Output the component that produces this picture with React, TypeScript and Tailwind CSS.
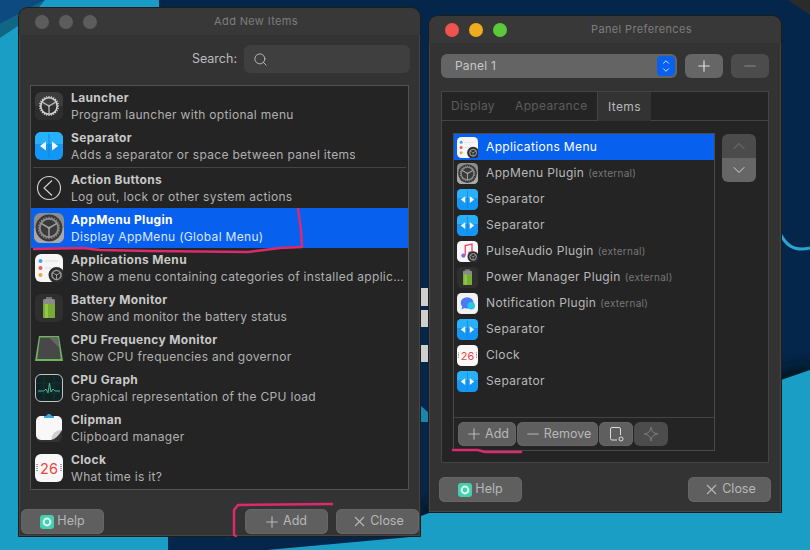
import React from "react";
import { Search, Plus, Minus, X, ChevronUp, ChevronDown } from "lucide-react";

type IconKind = "gearDark" | "gearLight" | "sep" | "action" | "apps" | "battery" | "cpu" | "graph" | "clipman" | "clock" | "pulse" | "notify";

const addItems: { name: string; desc: string; icon: IconKind; selected?: boolean; divider?: boolean }[] = [
  { name: "Launcher", desc: "Program launcher with optional menu", icon: "gearDark" },
  { name: "Separator", desc: "Adds a separator or space between panel items", icon: "sep", divider: true },
  { name: "Action Buttons", desc: "Log out, lock or other system actions", icon: "action" },
  { name: "AppMenu Plugin", desc: "Display AppMenu (Global Menu)", icon: "gearLight", selected: true },
  { name: "Applications Menu", desc: "Show a menu containing categories of installed applic…", icon: "apps" },
  { name: "Battery Monitor", desc: "Show and monitor the battery status", icon: "battery" },
  { name: "CPU Frequency Monitor", desc: "Show CPU frequencies and governor", icon: "cpu" },
  { name: "CPU Graph", desc: "Graphical representation of the CPU load", icon: "graph" },
  { name: "Clipman", desc: "Clipboard manager", icon: "clipman" },
  { name: "Clock", desc: "What time is it?", icon: "clock" },
];

const panelItems: { name: string; icon: IconKind; external?: boolean; selected?: boolean }[] = [
  { name: "Applications Menu", icon: "apps", selected: true },
  { name: "AppMenu Plugin", icon: "gearLight", external: true },
  { name: "Separator", icon: "sep" },
  { name: "Separator", icon: "sep" },
  { name: "PulseAudio Plugin", icon: "pulse", external: true },
  { name: "Power Manager Plugin", icon: "battery", external: true },
  { name: "Notification Plugin", icon: "notify", external: true },
  { name: "Separator", icon: "sep" },
  { name: "Clock", icon: "clock" },
  { name: "Separator", icon: "sep" },
];

function GearShape({ cx, cy, r, ring, spoke }: { cx: number; cy: number; r: number; ring: string; spoke: string }) {
  const teeth = Array.from({ length: 24 }, (_, i) => i * 15);
  return (
    <g>
      <circle cx={cx} cy={cy} r={r} fill="none" stroke={ring} strokeWidth={r * 0.2} />
      {teeth.map((a) => (
        <rect key={a} x={cx - r * 0.07} y={cy - r * 1.22} width={r * 0.14} height={r * 0.2} fill={ring} transform={`rotate(${a} ${cx} ${cy})`} />
      ))}
      {[210, 330, 90].map((a) => (
        <line key={a} x1={cx} y1={cy} x2={cx + r * Math.cos((a * Math.PI) / 180)} y2={cy + r * Math.sin((a * Math.PI) / 180)} stroke={spoke} strokeWidth={r * 0.16} />
      ))}
      <circle cx={cx} cy={cy} r={r * 0.14} fill={spoke} />
    </g>
  );
}

function AppIcon({ kind, size }: { kind: IconKind; size: number }) {
  return (
    <svg width={size} height={size} viewBox="0 0 28 28" className="shrink-0">
      {kind === "gearDark" && (
        <>
          <rect width="28" height="28" rx="6" fill="#3c3c3c" />
          <path d="M0 14 H28 V22 a6 6 0 0 1 -6 6 H6 a6 6 0 0 1 -6 -6 Z" fill="#2e2e2e" />
          <GearShape cx={14} cy={14} r={8.2} ring="#d0d0d0" spoke="#b8b8b8" />
        </>
      )}
      {kind === "gearLight" && (
        <>
          <rect width="28" height="28" rx="6" fill="#8d8d8d" />
          <path d="M0 14 H28 V22 a6 6 0 0 1 -6 6 H6 a6 6 0 0 1 -6 -6 Z" fill="#a8a8a8" />
          <circle cx="14" cy="14" r="12.5" fill="#3a3a3a" />
          <GearShape cx={14} cy={14} r={8.6} ring="#8a8a8a" spoke="#a0a0a0" />
        </>
      )}
      {kind === "sep" && (
        <>
          <rect width="28" height="28" rx="6" fill="#1496f5" />
          <path d="M0 6 a6 6 0 0 1 6 -6 H22 a6 6 0 0 1 6 6 V12 H0 Z" fill="#28b0fb" />
          <rect x="13.6" y="2" width="0.8" height="24" fill="#0f7fd8" />
          <path d="M5 14 L11 9.5 V18.5 Z M23 14 L17 9.5 V18.5 Z" fill="#f4f9ff" />
        </>
      )}
      {kind === "action" && (
        <>
          <circle cx="14" cy="14" r="11.5" fill="none" stroke="#d4d4d4" strokeWidth="1.1" />
          <path d="M17 6.5 L9 14 L17 21.5" fill="none" stroke="#d4d4d4" strokeWidth="1.1" />
        </>
      )}
      {kind === "apps" && (
        <>
          <rect width="28" height="28" rx="6" fill="#f6f6f6" />
          <circle cx="5.5" cy="7" r="2" fill="#4aa3f0" />
          <circle cx="5.5" cy="14" r="2" fill="#ef5a55" />
          <circle cx="5.5" cy="21" r="2" fill="#f2a53a" />
          <rect x="10" y="6.5" width="13" height="1" fill="#ddd" />
          <rect x="10" y="13.5" width="6" height="1" fill="#ddd" />
          <circle cx="21.5" cy="21" r="8" fill="#2d2d2d" />
          <GearShape cx={21.5} cy={21} r={4.4} ring="#bdbdbd" spoke="#bdbdbd" />
        </>
      )}
      {kind === "battery" && (
        <>
          <rect width="28" height="28" rx="6" fill="#2f2f2f" />
          <rect x="11" y="3" width="6" height="3" fill="#777" />
          <rect x="8" y="5" width="12" height="19" rx="1.5" fill="#8a8a8a" />
          <rect x="8" y="10" width="12" height="14" rx="1.5" fill="#77ad35" />
          <rect x="10" y="10" width="3" height="14" fill="#92c94a" />
        </>
      )}
      {kind === "cpu" && (
        <>
          <path d="M4 2 H24 L28 27 H0 Z" fill="#6fb560" />
          <path d="M5 3.4 H23 L25.8 25 H2.2 Z" fill="#484848" />
          <path d="M14 3.4 H23 L24.5 14 Z" fill="#666" />
        </>
      )}
      {kind === "graph" && (
        <>
          <rect x="0.5" y="0.5" width="27" height="27" rx="5.5" fill="#0f2424" stroke="#c4c4c4" />
          <path d="M3 17 H9 L11 15 L13 19 L14.5 9 L16 18 L18 15 L20 17 H25" fill="none" stroke="#56c6a0" strokeWidth="0.9" />
          <path d="M1 9 H27 M1 19 H27 M9 1 V27 M19 1 V27" stroke="#2a4444" strokeWidth="0.4" />
        </>
      )}
      {kind === "clipman" && (
        <>
          <rect x="1" y="2" width="26" height="26" rx="5" fill="#333" />
          <path d="M1 7 a5 5 0 0 1 5 -5 H22 a5 5 0 0 1 5 5 V16 L16 26 H6 a5 5 0 0 1 -5 -5 Z" fill="#f8f8f8" />
          <path d="M27 16 Q18 15 16 26 Q22 25 27 16 Z" fill="#cfcfcf" />
          <path d="M10 3 L14 -1 L18 3 Z M9 2 H19 V4 H9 Z" fill="#39a6e8" />
        </>
      )}
      {kind === "clock" && (
        <>
          <rect width="28" height="28" rx="6" fill="#f8f8f8" />
          <path d="M2 10 V18 M26 10 V18" stroke="#777" strokeWidth="1.4" strokeDasharray="1 1" />
          <text x="14" y="19.5" textAnchor="middle" fontSize="14.5" fill="#f0433f" fontFamily="Inter, sans-serif">26</text>
        </>
      )}
      {kind === "pulse" && (
        <>
          <rect width="28" height="28" rx="6" fill="#f7f7f7" />
          <path d="M11 19 V6 L20 4 V16" fill="none" stroke="#f0476f" strokeWidth="1.8" />
          <circle cx="8.5" cy="19.5" r="2.8" fill="#8d63e8" />
          <circle cx="17.5" cy="16.5" r="2.8" fill="#ee4d8c" />
          <circle cx="21.5" cy="21" r="7.5" fill="#2d2d2d" />
          <GearShape cx={21.5} cy={21} r={4.2} ring="#bdbdbd" spoke="#bdbdbd" />
        </>
      )}
      {kind === "notify" && (
        <>
          <rect width="28" height="28" rx="6" fill="#f2f2f2" />
          <path d="M5 13 a8.5 7.5 0 0 1 17 0 a8.5 7.5 0 0 1 -12 7 L6 22 L7 18 A7.5 7.5 0 0 1 5 13 Z" fill="#4a7bf2" />
          <circle cx="19" cy="17" r="5" fill="#26c8e8" />
        </>
      )}
    </svg>
  );
}

function HelpIcon() {
  return (
    <svg width="14" height="14" viewBox="0 0 14 14" className="mr-[1px] shrink-0">
      <rect width="14" height="14" rx="3" fill="#45cfae" />
      <circle cx="7" cy="7" r="3.4" fill="none" stroke="#d8f8ee" strokeWidth="2" />
    </svg>
  );
}

function Btn({ children, className }: { children: React.ReactNode; className: string }) {
  return (
    <button className={`flex items-center justify-center gap-[2px] rounded-[6px] bg-[#5f5f5f] text-[12.5px] text-[#b8b8b8] shadow-[inset_0_0_0_1px_#666] ${className}`}>
      {children}
    </button>
  );
}

function TitleBar({ title, lights }: { title: string; lights: string[] }) {
  return (
    <div className="flex h-[27px] shrink-0 items-center rounded-t-[10px] bg-[#383838] pl-4">
      <div className="flex gap-[10px]">
        {lights.map((c, i) => (
          <span key={i} className={`size-[14px] rounded-full ${c}`} />
        ))}
      </div>
      <div className="flex-1 pr-[5px] text-center text-[11px] tracking-[0.35px] text-[#7d7d7d]">{title}</div>
    </div>
  );
}

export default function App() {
  return (
    <div className="relative h-[550px] w-[810px] overflow-hidden bg-[#04264a] font-['Inter',sans-serif]">
      {/* wallpaper */}
      <svg className="absolute inset-0" width="810" height="550">
        <defs>
          <filter id="soft" x="-10%" y="-50%" width="120%" height="200%">
            <feGaussianBlur stdDeviation="7" />
          </filter>
        </defs>
        <rect x="0" y="0" width="159" height="60" fill="#1a9ac6" />
        <rect x="0" y="20" width="24" height="530" fill="#1a9ec6" />
        <rect x="0" y="530" width="168" height="20" fill="#1a9ec6" />
        <path d="M0 0 H45 L0 24 Z" fill="#0d4a80" />
        <path d="M45 0 L0 24 V38 L30 18 Z" fill="#0a3a50" opacity="0.55" />
        <path d="M421 516 L781 380 L810 370" fill="none" stroke="#01121c" strokeWidth="16" filter="url(#soft)" />
        <path d="M267 550 L421 536 V516 L781 380 L810 370 V550 Z" fill="#1a9ec6" />
        <path d="M781 235 Q790 253 810 248" fill="none" stroke="#2aa4d0" strokeWidth="3" />
        <path d="M788 0 H810 V15 Z" fill="#2b2b2b" />
        <rect x="421" y="288" width="8" height="18" fill="#cfcfcf" />
        <rect x="421" y="310" width="8" height="17" fill="#cfcfcf" />
        <rect x="421" y="345" width="8" height="17" fill="#cfcfcf" />
        <path d="M421 406 L429 413 V422 H421 Z" fill="#1a86b0" />
      </svg>

      {/* Add New Items */}
      <div className="absolute left-[18px] top-[7px] flex h-[530px] w-[403px] flex-col rounded-t-[10px] border border-[#1d1d1d] bg-[#333333] shadow-[inset_0_0_0_1px_#454545]">
        <TitleBar title="Add New Items" lights={["bg-[#5c5c5c]", "bg-[#5c5c5c]", "bg-[#5c5c5c]"]} />
        <div className="flex h-[50px] shrink-0 items-center justify-end gap-[7px] pb-[2px] pr-[10px]">
          <span className="text-[12.5px] text-[#bcbcbc]">Search:</span>
          <div className="flex h-[28px] w-[166px] items-center rounded-[6px] bg-[#3f3f3f] pl-[9px]">
            <Search size={15} className="text-[#c4c4c4]" strokeWidth={1.4} />
          </div>
        </div>
        <div className="mx-[11px] flex h-[405px] shrink-0 flex-col border border-[#525252] bg-[#242424]">
          {addItems.map((item) => (
            <React.Fragment key={item.name}>
              <div className={`flex h-[40px] shrink-0 items-center gap-[8px] pl-[4px] ${item.selected ? "bg-[#0860ef]" : ""}`}>
                <div className="flex w-[28px] justify-center">
                  <AppIcon kind={item.icon} size={item.selected ? 30 : 28} />
                </div>
                <div className="flex min-w-0 flex-col pt-[1px] leading-[18px]">
                  <span className={`text-[12px] font-bold tracking-[0.35px] ${item.selected ? "text-white" : "text-[#c8c8c8]"}`}>{item.name}</span>
                  <span className={`-mt-[1px] whitespace-nowrap text-[12px] tracking-[0.31px] ${item.selected ? "text-[#dce8ff]" : "text-[#b0b0b0]"}`}>{item.desc}</span>
                </div>
              </div>
              {item.divider && <div className="mx-[2px] h-[2px] shrink-0 border-b border-[#444]" />}
            </React.Fragment>
          ))}
        </div>
        <div className="mt-[19px] flex items-center gap-[8px] pl-[2px] pr-[1px]">
          <Btn className="h-[25px] w-[83px]">
            <HelpIcon />
            <span>Help</span>
          </Btn>
          <div className="flex-1" />
          <Btn className="h-[25px] w-[83px]">
            <Plus size={18} strokeWidth={1.5} className="-ml-[3px]" />
            <span>Add</span>
          </Btn>
          <Btn className="h-[25px] w-[83px]">
            <X size={17} strokeWidth={1.5} />
            <span>Close</span>
          </Btn>
        </div>
      </div>

      {/* Panel Preferences */}
      <div className="absolute left-[428px] top-[15px] flex h-[498px] w-[354px] flex-col rounded-t-[10px] border border-[#1d1d1d] bg-[#333333] shadow-[inset_0_0_0_1px_#454545]">
        <TitleBar title="Panel Preferences" lights={["bg-[#ee5350]", "bg-[#f0ab1e]", "bg-[#5cc83a]"]} />
        <div className="mx-[12px] mt-[11px] flex gap-[8px]">
          <div className="flex h-[24px] w-[236px] items-center justify-between rounded-[6px] bg-[#646464] pl-[14px] pr-[2px] text-[12px] tracking-[0.2px] text-[#c8c8c8]">
            <span>Panel 1</span>
            <span className="flex h-[20px] w-[18px] flex-col items-center justify-center rounded-[4px] bg-[#0860ef] text-white">
              <ChevronUp size={10} strokeWidth={2} className="-mb-[1px]" />
              <ChevronDown size={10} strokeWidth={2} className="-mt-[1px]" />
            </span>
          </div>
          <button className="flex h-[24px] w-[38px] items-center justify-center rounded-[6px] bg-[#666] text-[#e0e0e0]">
            <Plus size={18} strokeWidth={1.5} />
          </button>
          <button className="flex h-[24px] w-[38px] items-center justify-center rounded-[6px] bg-[#4c4c4c] text-[#8a8a8a]">
            <Minus size={18} strokeWidth={1.5} />
          </button>
        </div>
        <div className="mx-[12px] mt-[13px] flex h-[372px] flex-col border border-[#444] bg-[#242424]">
          <div className="flex h-[29px] shrink-0 border-b border-[#444] text-[12px] tracking-[0.35px]">
            <span className="flex w-[63px] items-center pl-[9px] text-[#5c5c5c]">Display</span>
            <span className="flex w-[92px] items-center pl-[10px] text-[#5c5c5c]">Appearance</span>
            <span className="mb-[-1px] flex w-[54px] items-center justify-center border-l border-[#444] bg-[#333] text-[#b8b8b8]">Items</span>
          </div>
          <div className="flex flex-1 items-start gap-[7px] pl-[11px] pt-[12px]">
            <div className="flex h-[318px] w-[262px] flex-col border border-[#4a4a4a]">
              <div className="flex flex-1 flex-col">
                {panelItems.map((p, i) => (
                  <div key={i} className={`flex h-[26px] shrink-0 items-center gap-[8px] pl-[3px] ${p.selected ? "bg-[#0860ef]" : ""}`}>
                    <AppIcon kind={p.icon} size={21} />
                    <span className={`text-[12px] tracking-[0.35px] ${p.selected ? "text-white" : "text-[#b8b8b8]"}`}>
                      {p.name}
                      {p.external && <span className="ml-[4px] text-[10px] tracking-[0.25px] text-[#777]">(external)</span>}
                    </span>
                  </div>
                ))}
              </div>
              <div className="flex h-[33px] shrink-0 items-center gap-[1px] border-t border-[#444] pl-[4px]">
                <Btn className="h-[24px] w-[58px]">
                  <Plus size={18} strokeWidth={1.5} />
                  <span>Add</span>
                </Btn>
                <Btn className="h-[24px] w-[81px]">
                  <Minus size={18} strokeWidth={1.5} />
                  <span>Remove</span>
                </Btn>
                <Btn className="h-[24px] w-[34px]">
                  <svg width="16" height="16" viewBox="0 0 16 16" fill="none" stroke="#dcdcdc" strokeWidth="1">
                    <path d="M9 14 H4 a1.5 1.5 0 0 1 -1.5 -1.5 V3 A1.5 1.5 0 0 1 4 1.5 H11 A1.5 1.5 0 0 1 12.5 3 V9" />
                    <circle cx="13" cy="13" r="2" />
                  </svg>
                </Btn>
                <button className="flex h-[24px] w-[34px] items-center justify-center rounded-[6px] bg-[#4c4c4c]">
                  <svg width="16" height="16" viewBox="0 0 16 16" fill="none" stroke="#7c7c7c" strokeWidth="1">
                    <path d="M8 1 C8.6 5.5 10.5 7.4 15 8 C10.5 8.6 8.6 10.5 8 15 C7.4 10.5 5.5 8.6 1 8 C5.5 7.4 7.4 5.5 8 1 Z" />
                  </svg>
                </button>
              </div>
            </div>
            <div className="mt-[1px] flex w-[34px] flex-col overflow-hidden rounded-[6px]">
              <div className="flex h-[24px] items-center justify-center bg-[#4b4b4b] text-[#7a7a7a]">
                <ChevronUp size={20} strokeWidth={1.1} />
              </div>
              <div className="flex h-[24px] items-center justify-center bg-[#666] text-[#dedede]">
                <ChevronDown size={20} strokeWidth={1.1} />
              </div>
            </div>
          </div>
        </div>
        <div className="mt-[14px] flex justify-between px-[10px]">
          <Btn className="h-[25px] w-[83px]">
            <HelpIcon />
            <span>Help</span>
          </Btn>
          <Btn className="h-[25px] w-[83px]">
            <X size={17} strokeWidth={1.5} />
            <span>Close</span>
          </Btn>
        </div>
      </div>

      {/* hand-drawn marks */}
      <svg className="pointer-events-none absolute inset-0" width="810" height="550" fill="none" stroke="#dc2a6c" strokeWidth="2.5" strokeLinecap="round" strokeLinejoin="round">
        <path d="M34 249 L83 248 L100 250 L150 251 L248 252 L280 248 L302 247 L301 230 L298 209" />
        <path d="M332 504 L238 505 L234 510 L234 535 L236 536" />
        <path d="M453 450 L478 450 L485 452 L521 452" />
      </svg>
    </div>
  );
}
